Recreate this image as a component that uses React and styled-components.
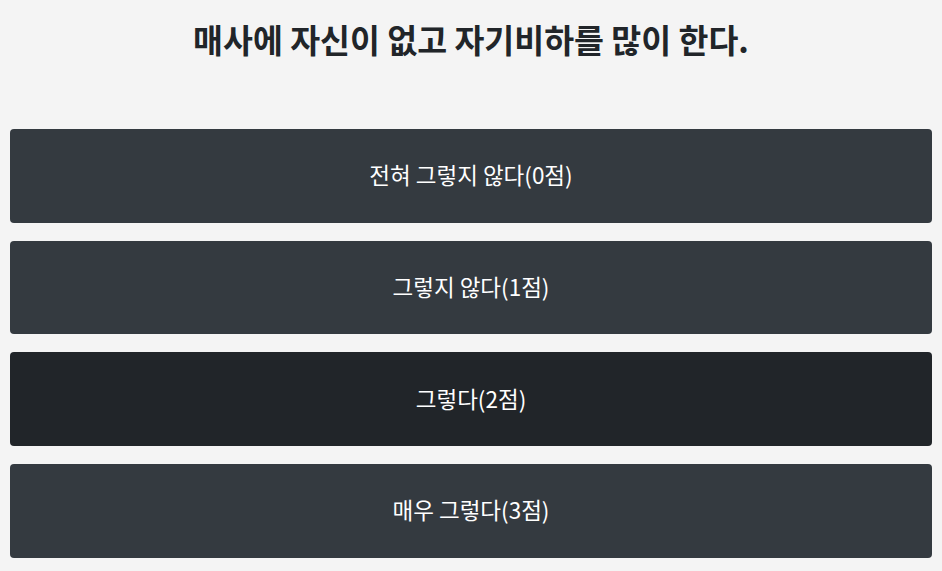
import React from "react";
import styled, { createGlobalStyle } from "styled-components";

const Global = createGlobalStyle`
  html, body { margin: 0; padding: 0; background: #f4f4f4; }
  body { font-family: "Noto Sans CJK KR", "Noto Sans", sans-serif; }
`;

const Page = styled.div`
  padding: 0 10px;
  display: flex;
  flex-direction: column;
`;

const Title = styled.h1`
  margin: 0;
  height: 129px;
  padding-top: 14px;
  box-sizing: border-box;
  text-align: center;
  font-size: 32.5px;
  font-weight: 700;
  color: #212529;
  line-height: 50px;
`;

const List = styled.div`
  display: flex;
  flex-direction: column;
  gap: 18px;
`;

const Option = styled.button`
  height: 93.67px;
  border: none;
  border-radius: 4px;
  background: ${(p) => (p.$active ? "#212529" : "#343a40")};
  color: #ffffff;
  font-family: "Noto Sans CJK KR", "Noto Sans", sans-serif;
  font-size: 22.5px;
  padding: 0 0 3px;
  cursor: pointer;
`;

const options = [
  "전혀 그렇지 않다(0점)",
  "그렇지 않다(1점)",
  "그렇다(2점)",
  "매우 그렇다(3점)",
];

export default function App() {
  return (
    <>
      <Global />
      <Page>
        <Title>매사에 자신이 없고 자기비하를 많이 한다.</Title>
        <List>
          {options.map((o, i) => (
            <Option key={o} $active={i === 2}>
              {o}
            </Option>
          ))}
        </List>
      </Page>
    </>
  );
}
